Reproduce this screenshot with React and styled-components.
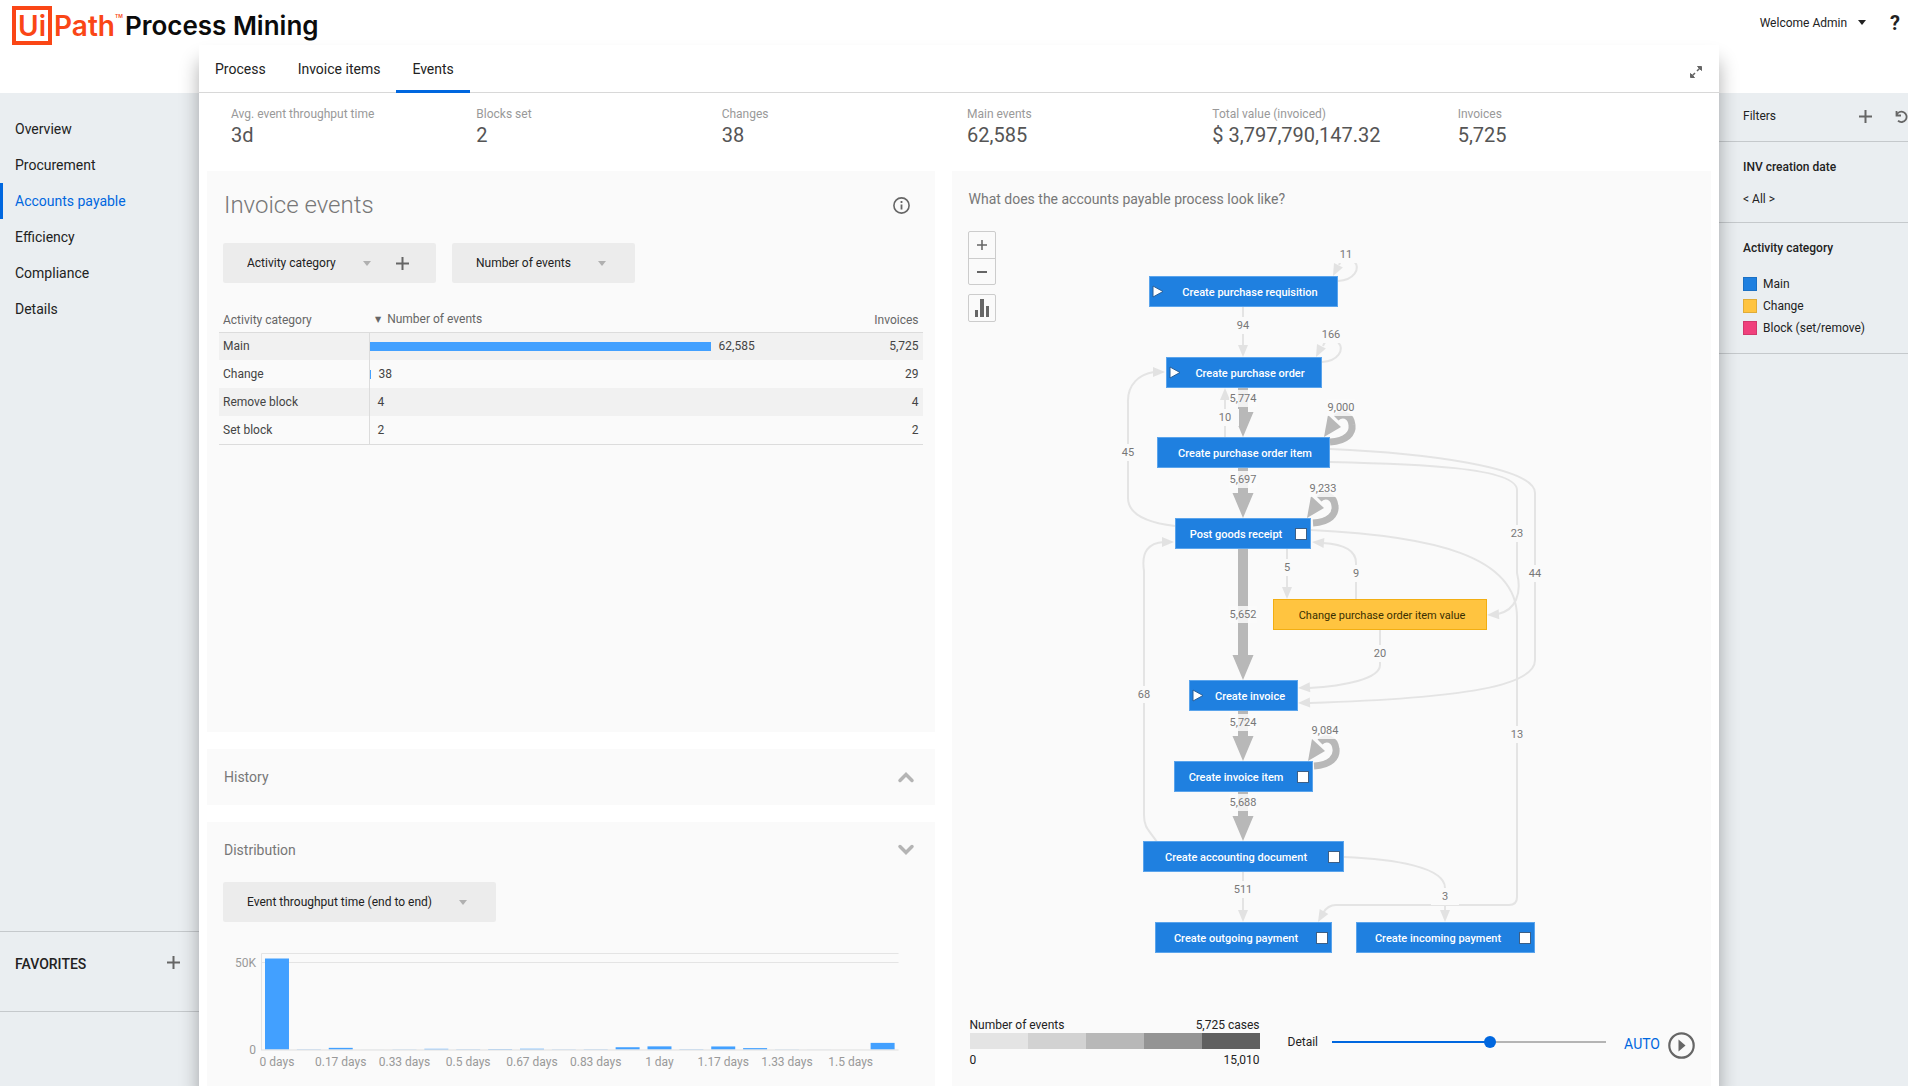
import React, { useState } from "react"
import styled, { createGlobalStyle, css } from "styled-components"

const GlobalStyle = createGlobalStyle`
	* {
		box-sizing: border-box;
	}
	body {
		margin: 0;
		background: #fff;
		color: #222;
		font-family: Roboto, "Liberation Sans", sans-serif;
		font-size: 12px;
		line-height: 16px;
	}
	button, select {
		margin: 0;
		padding: 0;
		border: 0;
		background: none;
		color: inherit;
		font: inherit;
		cursor: pointer;
	}
	h1, h2, h3, ul, dl, dd {
		margin: 0;
		padding: 0;
		font-weight: 400;
	}
	svg {
		display: block;
	}
`

const Page = styled.div`
	display: flex;
	flex-direction: column;
	height: 100vh;
	overflow: hidden;
`

/* header */

const Header = styled.header`
	display: flex;
	flex: none;
	justify-content: space-between;
	height: 45px;
	padding: 6px 8px 0 12px;
`

const Logo = styled.div`
	display: flex;
	color: #fa4616;
	font-family: Inter, sans-serif;
	font-size: 28px;
	font-weight: 600;
	line-height: 40px;
`

const LogoBox = styled.span`
	width: 40px;
	height: 39px;
	margin-right: 2px;
	border: 4px solid #fa4616;
	line-height: 32px;
	text-align: center;
`

const LogoMark = styled.sup`
	padding-top: 5px;
	font-size: 5px;
	line-height: 10px;
`

const LogoProduct = styled.span`
	margin-left: 2px;
	color: #0b0b0b;
	font-size: 26px;
`

const HeaderActions = styled.div`
	display: flex;
	align-items: center;
	height: 33px;
`

const UserMenu = styled.button`
	display: flex;
	align-items: center;
	gap: 11px;
	margin-right: 24px;
`

const Help = styled.button`
	font-size: 20px;
	font-weight: 700;
`

/* page columns */

const Body = styled.div`
	display: grid;
	grid-template-columns: 199px minmax(0, 1fr) 189px;
	flex: 1;
	min-height: 0;
`

const Side = styled.div`
	display: flex;
	flex-direction: column;
	margin-top: 48px;
	background: #eaeef1;
`

const Nav = styled.nav`
	flex: 1;
	padding-top: 18px;
`

const NavLink = styled.a`
	display: block;
	padding-left: 12px;
	border-left: 3px solid ${p => (p.$active ? "#0067df" : "transparent")};
	color: ${p => (p.$active ? "#0067df" : "#222")};
	font-size: 14px;
	line-height: 36px;
	text-decoration: none;
`

const Favorites = styled.section`
	display: flex;
	align-items: flex-start;
	justify-content: space-between;
	height: 81px;
	margin-bottom: 74px;
	padding: 24px 19px 0 15px;
	border: solid #c5c9cc;
	border-width: 1px 0;

	h2 {
		font-size: 14px;
		font-weight: 500;
	}
`

const IconButton = styled.button`
	display: flex;
	color: #666;
`

const FilterSection = styled.section`
	padding: ${p => p.$pad};
	border-bottom: 1px solid #c5c9cc;
`

const FilterTitle = styled.h2`
	font-size: 12px;
	font-weight: ${p => p.$weight || 500};
`

const FilterHead = styled.div`
	display: flex;
	align-items: center;

	h2 {
		flex: 1;
	}
	button + button {
		margin-left: 23px;
	}
`

const FilterValue = styled.button`
	margin-top: 16px;
`

const Legend = styled.ul`
	display: grid;
	gap: 6px;
	margin-top: 20px;
	list-style: none;

	li {
		display: flex;
		align-items: center;
		gap: 6px;
		white-space: nowrap;
	}
`

const Swatch = styled.span`
	width: 14px;
	height: 14px;
	border: 1px solid rgba(0, 0, 0, 0.12);
	background: ${p => p.$color};
`

/* middle column */

const Main = styled.main`
	z-index: 1;
	display: flex;
	flex-direction: column;
	background: #fff;
	box-shadow: 0 16px 18px rgba(0, 0, 0, 0.32);
`

const TabBar = styled.div`
	display: flex;
	flex: none;
	align-items: stretch;
	height: 48px;
	padding-right: 17px;
	border-bottom: 1px solid #d8d8d8;
`

const Tab = styled.button`
	margin-bottom: -1px;
	padding: 3px 16px 0;
	border-bottom: 3px solid ${p => (p.$active ? "#0067df" : "transparent")};
	font-size: 14px;
`

const Expand = styled(IconButton)`
	align-items: center;
	margin-left: auto;
	padding-top: 7px;
`

const Kpis = styled.dl`
	display: grid;
	flex: none;
	grid-template-columns: repeat(6, 1fr);
	height: 78px;
	padding: 13px 16px 0 32px;

	dt {
		color: #999;
	}
	dd {
		color: #555;
		font-size: 20px;
		line-height: 26px;
	}
`

const Panels = styled.div`
	display: grid;
	grid-template-columns: 728fr 760fr;
	flex: 1;
	gap: 17px;
	min-height: 0;
	padding: 0 8px;
`

const Column = styled.div`
	display: flex;
	flex-direction: column;
	gap: 17px;
`

const Panel = styled.section`
	flex: ${p => p.$flex || "none"};
	padding: ${p => p.$pad};
	background: #fafafa;
`

const PanelHead = styled.div`
	display: flex;
	align-items: center;
	justify-content: space-between;
	padding: 0 17px 0 1px;
	color: #777;
`

const BigTitle = styled.h1`
	font-size: 24px;
	font-weight: 300;
	line-height: 32px;
`

const PanelTitle = styled.h2`
	font-size: 14px;
	line-height: 20px;
`

const Pickers = styled.div`
	display: flex;
	gap: 16px;
	margin: ${p => p.$margin};
`

const PickerBox = styled.div`
	display: flex;
	align-items: center;
	height: 40px;
	padding: 0 ${p => (p.$wide ? 27 : 29)}px 0 24px;
	border-radius: 2px;
	background: #ececec;

	label {
		display: flex;
		align-items: center;
		gap: 27px;
		color: #b0b0b0;
	}
	select {
		appearance: none;
		color: #222;
	}
	button {
		margin-left: 25px;
	}
`

const Table = styled.table`
	width: 100%;
	margin-left: -4px;
	border-collapse: collapse;
	border-bottom: 1px solid #dcdcdc;
	color: #444;

	th {
		height: 26px;
		padding: 2px 4px 0;
		border-bottom: 1px solid #dcdcdc;
		color: #666;
		font-weight: 400;
		text-align: left;
	}
	td {
		height: 28px;
		padding: 0 4px;
	}
	th:first-child {
		width: 150px;
	}
	th:last-child,
	td:last-child {
		width: 110px;
		text-align: right;
	}
	td:nth-child(2) {
		padding: 0;
		border-left: 1px solid #dcdcdc;
	}
	tbody tr:nth-child(odd) {
		background: #f1f1f1;
	}
`

const BarCell = styled.div`
	display: flex;
	align-items: center;
	gap: 8px;
`

const Bar = styled.span`
	height: 9px;
	background: #42a0ff;
`

const Sort = styled.span`
	margin: 0 6px 0 2px;
	font-family: "DejaVu Sans", sans-serif;
	font-size: 8px;
	vertical-align: 1px;
`

const Chart = styled.div`
	display: grid;
	grid-template-columns: 33px minmax(0, 1fr);
	column-gap: 5px;
	margin: 31px 33px 0 0;
	color: #999;
`

const YAxis = styled.div`
	display: flex;
	flex-direction: column;
	justify-content: space-between;
	height: 105px;
	margin-bottom: -4px;
	padding-top: 2px;
	text-align: right;
`

const Plot = styled.svg`
	width: 100%;
	height: 98px;
`

const XAxis = styled.div`
	display: grid;
	grid-column: 2;
	grid-template-columns: repeat(20, minmax(0, 1fr));
`

const XLabel = styled.span`
	display: flex;
	justify-content: center;
	white-space: nowrap;
`

/* process graph */

const GraphArea = styled.div`
	display: grid;
	grid-template-columns: 28px minmax(0, 1fr) 28px;
	height: 786px;
	margin-top: 22px;
`

const Graph = styled.svg`
	width: 455px;
	height: 740px;
	margin: 0 auto;
	font-size: 11px;
	text-anchor: middle;
`

const toolBorder = css`
	border: 1px solid #ccc;
	border-radius: 2px;
`

const Tools = styled.div`
	display: flex;
	flex-direction: column;
	gap: 9px;
`

const ZoomGroup = styled.div`
	${toolBorder}

	button + button {
		border-top: 1px solid #ccc;
	}
`

const Tool = styled.button`
	display: flex;
	align-items: center;
	justify-content: center;
	width: 26px;
	height: 26px;
	color: #666;
	${p => p.$framed && css`
		width: 28px;
		height: 28px;
		${toolBorder}
	`}
`

const GraphFooter = styled.div`
	display: flex;
	padding-left: 2px;
`

const Scale = styled.div`
	width: 290px;
`

const ScaleText = styled.div`
	display: flex;
	justify-content: space-between;
`

const ScaleBar = styled.div`
	display: flex;
	height: 16px;
	margin-bottom: 3px;
`

const ScaleStep = styled.span`
	flex: 1;
	background: ${p => p.$color};
`

const Detail = styled.label`
	display: flex;
	flex: 1;
	align-items: center;
	gap: 14px;
	height: 16px;
	margin: 17px 18px 0 28px;
`

const Slider = styled.input`
	flex: 1;
	min-width: 0;
	height: 12px;
	margin: 0;
	appearance: none;
	background: linear-gradient(#0067df, #0067df) no-repeat 0 5px / ${p => p.value}% 2px,
		linear-gradient(#b4b4b4, #b4b4b4) no-repeat 0 5px / 100% 2px;

	&::-webkit-slider-thumb {
		width: 12px;
		height: 12px;
		appearance: none;
		border-radius: 50%;
		background: #0067df;
	}
`

const Auto = styled.button`
	height: 16px;
	margin: 19px 8px 0 0;
	color: #0067df;
	font-size: 14px;
`

const Play = styled(IconButton)`
	align-self: flex-start;
	margin-top: 15px;
`

const Plus = ({ size = 13, width = 2 }) => (
	<svg width={size} height={size} viewBox="0 0 13 13" stroke="currentColor" strokeWidth={width} aria-hidden="true">
		<path d="M6.5 0v13M0 6.5h13" />
	</svg>
)

const Caret = () => (
	<svg width="8" height="5" viewBox="0 0 8 5" fill="currentColor" aria-hidden="true">
		<path d="M0 0h8L4 5z" />
	</svg>
)

const Chevron = ({ up }) => (
	<svg width="18" height="12" viewBox="0 0 18 12" fill="none" stroke="#b4b4b4" strokeWidth="3.5" strokeLinecap="round" aria-hidden="true">
		<path d={up ? "M3 9.500l6-6 6 6" : "M3 2.500l6 6 6-6"} />
	</svg>
)

const pages = ["Overview", "Procurement", "Accounts payable", "Efficiency", "Compliance", "Details"]

const tabs = ["Process", "Invoice items", "Events"]

const kpis = [
	["Avg. event throughput time", "3d"],
	["Blocks set", "2"],
	["Changes", "38"],
	["Main events", "62,585"],
	["Total value (invoiced)", "$ 3,797,790,147.32"],
	["Invoices", "5,725"],
]

const categories = [
	["Main", "#1f80e0"],
	["Change", "#ffc440"],
	["Block (set/remove)", "#f0407c"],
]

const rows = [
	{ name: "Main", events: 62585, invoices: "5,725" },
	{ name: "Change", events: 38, invoices: "29" },
	{ name: "Remove block", events: 4, invoices: "4" },
	{ name: "Set block", events: 2, invoices: "2" },
]

const buckets = [
	52300, 150, 950, 20, 100, 400, 160, 280, 440, 120,
	160, 1300, 1800, 180, 1750, 800, 80, 30, 10, 3800,
]

const bucketLabels = [
	"0 days", "0.17 days", "0.33 days", "0.5 days", "0.67 days",
	"0.83 days", "1 day", "1.17 days", "1.33 days", "1.5 days",
]

// tx is the centre of the label, which makes room for the mark
const nodes = [
	{ x: 45, y: 45, w: 189, tx: 146, text: "Create purchase requisition", mark: "start" },
	{ x: 62, y: 126, w: 156, tx: 146, text: "Create purchase order", mark: "start" },
	{ x: 53, y: 206, w: 173, tx: 141, text: "Create purchase order item" },
	{ x: 71, y: 287, w: 136, tx: 132, text: "Post goods receipt", mark: "end" },
	{ x: 169, y: 368, w: 214, tx: 278, text: "Change purchase order item value", change: true },
	{ x: 85, y: 449, w: 109, tx: 146, text: "Create invoice", mark: "start" },
	{ x: 70, y: 530, w: 139, tx: 132, text: "Create invoice item", mark: "end" },
	{ x: 39, y: 610, w: 201, tx: 132, text: "Create accounting document", mark: "end" },
	{ x: 51, y: 691, w: 177, tx: 132, text: "Create outgoing payment", mark: "end" },
	{ x: 252, y: 691, w: 179, tx: 334, text: "Create incoming payment", mark: "end" },
]

// path, then arrow tip and the angle that it points at (0 is down)
const edges = [
	{ d: "M139 76V114", tip: [139, 126, 0] },
	{ d: "M121 206V168", tip: [121, 157, 180] },
	{ d: "M71 295C46 292 24 284 24 267V172C23 153 36 143 50 141", tip: [61, 141, -90] },
	{ d: "M53 611C45 599 40 597 40 584V340C37 320 45 312 60 311", tip: [70, 311, -90] },
	{ d: "M226 218C320 222 431 236 431 262V429C431 455 360 467 206 472", tip: [194, 472, 88] },
	{ d: "M226 231C310 233 413 236 413 259V342C418 362 412 379 394 383", tip: [383, 384, 86] },
	{ d: "M207 299C330 305 413 325 413 386V666Q413 674 405 674H232C226 674 222 677 219 682", tip: [214, 691, 30] },
	{ d: "M183 318V357", tip: [183, 368, 0] },
	{ d: "M252 368V332C252 318 236 313 219 312", tip: [208, 311, 95] },
	{ d: "M276 399V434C276 448 240 455 205 457", tip: [194, 457, 86] },
	{ d: "M139 641V680", tip: [139, 691, 0] },
	{ d: "M240 626C290 628 341 636 341 657V680", tip: [341, 691, 0] },
	{ d: "M234 50C250 49 257 38 250 30C246 24 238 26 235 34", tip: [229, 45, 27] },
	{ d: "M218 131C234 130 241 119 234 111C230 105 222 107 219 115", tip: [212, 126, 27] },
]

const heavyEdges = [[157, 206], [237, 287], [318, 449], [480, 530], [561, 610]]

const loops = [[0, 0], [-17, 81], [-16, 324]]

const labels = [
	[242, 23, "11"], [139, 94, "94"], [227, 103, "166"], [139, 167, "5,774"],
	[121, 186, "10"], [237, 176, "9,000"], [24, 221, "45"], [139, 248, "5,697"],
	[219, 257, "9,233"], [413, 302, "23"], [183, 336, "5"], [252, 342, "9"],
	[431, 342, "44"], [139, 383, "5,652"], [276, 422, "20"], [40, 463, "68"],
	[139, 491, "5,724"], [221, 499, "9,084"], [413, 503, "13"], [139, 571, "5,688"],
	[139, 658, "511"], [341, 665, "3"],
]

const Node = ({ x, y, w, tx, text, mark, change }) => (
	<g>
		<rect x={x + 0.5} y={y + 0.5} width={w - 1} height="30" fill={change ? "#ffc440" : "#1f80e0"} stroke={change ? "#f2ae12" : "#5aa4ec"} />
		<text x={tx} y={y + 20} fill={change ? "#3a3000" : "#fff"} fontWeight={change ? 400 : 500}>
			{text}
		</text>
		{mark === "start" && <path d={`M${x + 4} ${y + 10}v11l10-5.500z`} fill="#fff" stroke="#2b5f96" />}
		{mark === "end" && <rect x={x + w - 15.5} y={y + 10.5} width="11" height="11" fill="#fff" stroke="#3c5f86" />}
	</g>
)

const ProcessGraph = () => (
	<Graph viewBox="0 0 455 740" role="img" aria-label="Accounts payable process">
		{edges.map(({ d, tip: [x, y, angle] }) => (
			<g key={d}>
				<path d={d} fill="none" stroke="#e4e4e4" strokeWidth="2" />
				<path d="M0 0L-5 -12H5Z" fill="#e2e2e2" transform={`translate(${x} ${y}) rotate(${angle})`} />
			</g>
		))}
		{heavyEdges.map(([from, to]) => (
			<path key={from} d={`M134 ${from}h10V${to - 25}h5.500L139 ${to}L128.500 ${to - 25}H134Z`} fill="#b8b8b8" />
		))}
		{loops.map(([x, y]) => (
			<g key={y} transform={`translate(${x} ${y})`}>
				<path d="M226 211C243 210 249 202 248 194C247 184 238 181 232 187" fill="none" stroke="#b8b8b8" strokeWidth="7" />
				<path d="M220 206L224 184L237 196Z" fill="#b8b8b8" />
			</g>
		))}
		{labels.map(([x, y, text]) => (
			<g key={text}>
				<rect x={x - 14} y={y - 8} width="28" height="17" fill="#fafafa" fillOpacity={text.includes(",") ? 0.85 : 1} />
				<text x={x} y={y + 4} fill="#777">
					{text}
				</text>
			</g>
		))}
		{nodes.map(node => (
			<Node key={node.text} {...node} />
		))}
	</Graph>
)

const Picker = ({ label, options, addable }) => (
	<PickerBox $wide={addable}>
		<label>
			<select aria-label={label}>
				{options.map(option => (
					<option key={option}>{option}</option>
				))}
			</select>
			<Caret />
		</label>
		{addable && (
			<IconButton aria-label="Add attribute">
				<Plus />
			</IconButton>
		)}
	</PickerBox>
)

const Distribution = () => (
	<Chart>
		<YAxis>
			<span>50K</span>
			<span>0</span>
		</YAxis>
		<Plot viewBox="0 0 638 98" preserveAspectRatio="none" aria-hidden="true">
			<path d="M0.500 97V0.500H638M0.500 9.500H638" fill="none" stroke="#e4e4e4" />
			{buckets.map((count, i) => {
				const height = (count / 50000) * 87
				return <rect key={i} x={4 + i * 31.9} y={96.5 - height} width="24" height={height} fill="#42a0ff" />
			})}
			<path d="M0 97H638" stroke="#e0e0e0" />
		</Plot>
		<XAxis>
			{buckets.map((count, i) => (
				<XLabel key={i}>{i % 2 === 0 && bucketLabels[i / 2]}</XLabel>
			))}
		</XAxis>
	</Chart>
)

export default function App() {
	const [tab, setTab] = useState("Events")
	const [detail, setDetail] = useState(58)

	return (
		<Page>
			<GlobalStyle />
			<Header>
				<Logo>
					<LogoBox>Ui</LogoBox>
					Path
					<LogoMark>TM</LogoMark>
					<LogoProduct>Process Mining</LogoProduct>
				</Logo>
				<HeaderActions>
					<UserMenu>
						Welcome Admin
						<Caret />
					</UserMenu>
					<Help aria-label="Help">?</Help>
				</HeaderActions>
			</Header>

			<Body>
				<Side>
					<Nav>
						{pages.map(page => (
							<NavLink key={page} href="#" $active={page === "Accounts payable"}>
								{page}
							</NavLink>
						))}
					</Nav>
					<Favorites>
						<h2>FAVORITES</h2>
						<IconButton aria-label="Add favorite">
							<Plus />
						</IconButton>
					</Favorites>
				</Side>

				<Main>
					<TabBar>
						{tabs.map(name => (
							<Tab key={name} $active={name === tab} onClick={() => setTab(name)}>
								{name}
							</Tab>
						))}
						<Expand aria-label="Expand">
							<svg width="12" height="12" viewBox="0 0 12 12" fill="currentColor" stroke="currentColor" aria-hidden="true">
								<path d="M7.500 .5h4v4zM.5 7.500v4h4z" />
								<path d="M10 2L7 5M5 7L2 10" strokeWidth="1.500" />
							</svg>
						</Expand>
					</TabBar>

					<Kpis>
						{kpis.map(([label, value]) => (
							<div key={label}>
								<dt>{label}</dt>
								<dd>{value}</dd>
							</div>
						))}
					</Kpis>

					<Panels>
						<Column>
							<Panel $pad="18px 8px 0 16px" $flex="0 0 561px">
								<PanelHead>
									<BigTitle>Invoice events</BigTitle>
									<IconButton aria-label="Info">
										<svg width="17" height="17" viewBox="0 0 17 17" fill="none" stroke="currentColor" aria-hidden="true">
											<circle cx="8.500" cy="8.500" r="7.600" strokeWidth="1.600" />
											<path d="M8.500 4v2M8.500 7.500v5" strokeWidth="1.800" />
										</svg>
									</IconButton>
								</PanelHead>
								<Pickers $margin="22px 0 23px">
									<Picker label="Attribute" options={["Activity category"]} addable />
									<Picker label="Metric" options={["Number of events"]} />
								</Pickers>
								<Table>
									<thead>
										<tr>
											<th>Activity category</th>
											<th>
												<Sort>▼</Sort>
												Number of events
											</th>
											<th>Invoices</th>
										</tr>
									</thead>
									<tbody>
										{rows.map(row => (
											<tr key={row.name}>
												<td>{row.name}</td>
												<td>
													<BarCell>
														<Bar style={{ width: `${(row.events / 62585) * 77}%`, minWidth: row.events > 10 ? 1 : 0 }} />
														{row.events.toLocaleString("en-US")}
													</BarCell>
												</td>
												<td>{row.invoices}</td>
											</tr>
										))}
									</tbody>
								</Table>
							</Panel>

							<Panel $pad="18px 3px 18px 16px">
								<PanelHead>
									<PanelTitle>History</PanelTitle>
									<IconButton aria-label="Expand history">
										<Chevron up />
									</IconButton>
								</PanelHead>
							</Panel>

							<Panel $pad="18px 3px 0 16px" $flex="1">
								<PanelHead>
									<PanelTitle>Distribution</PanelTitle>
									<IconButton aria-label="Collapse distribution">
										<Chevron />
									</IconButton>
								</PanelHead>
								<Pickers $margin="22px 0 0">
									<Picker label="Distribution metric" options={["Event throughput time (end to end)"]} />
								</Pickers>
								<Distribution />
							</Panel>
						</Column>

						<Panel $pad="18px 16px 0 16px">
							<PanelHead>
								<PanelTitle>What does the accounts payable process look like?</PanelTitle>
							</PanelHead>
							<GraphArea>
								<Tools>
									<ZoomGroup>
										<Tool aria-label="Zoom in">
											<Plus size={10} />
										</Tool>
										<Tool aria-label="Zoom out">
											<svg width="10" height="2" viewBox="0 0 10 2" fill="currentColor" aria-hidden="true">
												<path d="M0 0h10v2H0z" />
											</svg>
										</Tool>
									</ZoomGroup>
									<Tool $framed aria-label="Statistics">
										<svg width="14" height="18" viewBox="0 0 14 18" fill="currentColor" aria-hidden="true">
											<path d="M0 11h3v7H0zM5 0h4v18H5zM11 7h3v11h-3z" />
										</svg>
									</Tool>
								</Tools>
								<ProcessGraph />
							</GraphArea>
							<GraphFooter>
								<Scale>
									<ScaleText>
										<span>Number of events</span>
										<span>5,725 cases</span>
									</ScaleText>
									<ScaleBar>
										{["#e4e4e4", "#d2d2d2", "#b8b8b8", "#949494", "#606060"].map(color => (
											<ScaleStep key={color} $color={color} />
										))}
									</ScaleBar>
									<ScaleText>
										<span>0</span>
										<span>15,010</span>
									</ScaleText>
								</Scale>
								<Detail>
									Detail
									<Slider type="range" min="0" max="100" value={detail} onChange={e => setDetail(e.target.value)} />
								</Detail>
								<Auto>AUTO</Auto>
								<Play aria-label="Play">
									<svg width="27" height="27" viewBox="0 0 27 27" aria-hidden="true">
										<circle cx="13.500" cy="13.500" r="12.200" fill="none" stroke="#666" strokeWidth="2.200" />
										<path d="M10.500 7.500v12l7-6z" fill="#666" />
									</svg>
								</Play>
							</GraphFooter>
						</Panel>
					</Panels>
				</Main>

				<Side>
					<FilterSection $pad="15px 0 17px 24px">
						<FilterHead>
							<FilterTitle $weight={400}>Filters</FilterTitle>
							<IconButton aria-label="Add filter">
								<Plus />
							</IconButton>
							<IconButton aria-label="Reset filters">
								<svg width="13" height="13" viewBox="0 0 13 13" fill="none" stroke="currentColor" strokeWidth="1.800" aria-hidden="true">
									<path d="M1.500 1v4.500h4.500M1.500 5A5.200 5.200 0 1 1 3 10.800" />
								</svg>
							</IconButton>
						</FilterHead>
					</FilterSection>
					<FilterSection $pad="17px 0 15px 24px">
						<FilterTitle>INV creation date</FilterTitle>
						<FilterValue>&lt; All &gt;</FilterValue>
					</FilterSection>
					<FilterSection $pad="17px 0 17px 24px">
						<FilterTitle>Activity category</FilterTitle>
						<Legend>
							{categories.map(([name, color]) => (
								<li key={name}>
									<Swatch $color={color} />
									{name}
								</li>
							))}
						</Legend>
					</FilterSection>
				</Side>
			</Body>
		</Page>
	)
}
